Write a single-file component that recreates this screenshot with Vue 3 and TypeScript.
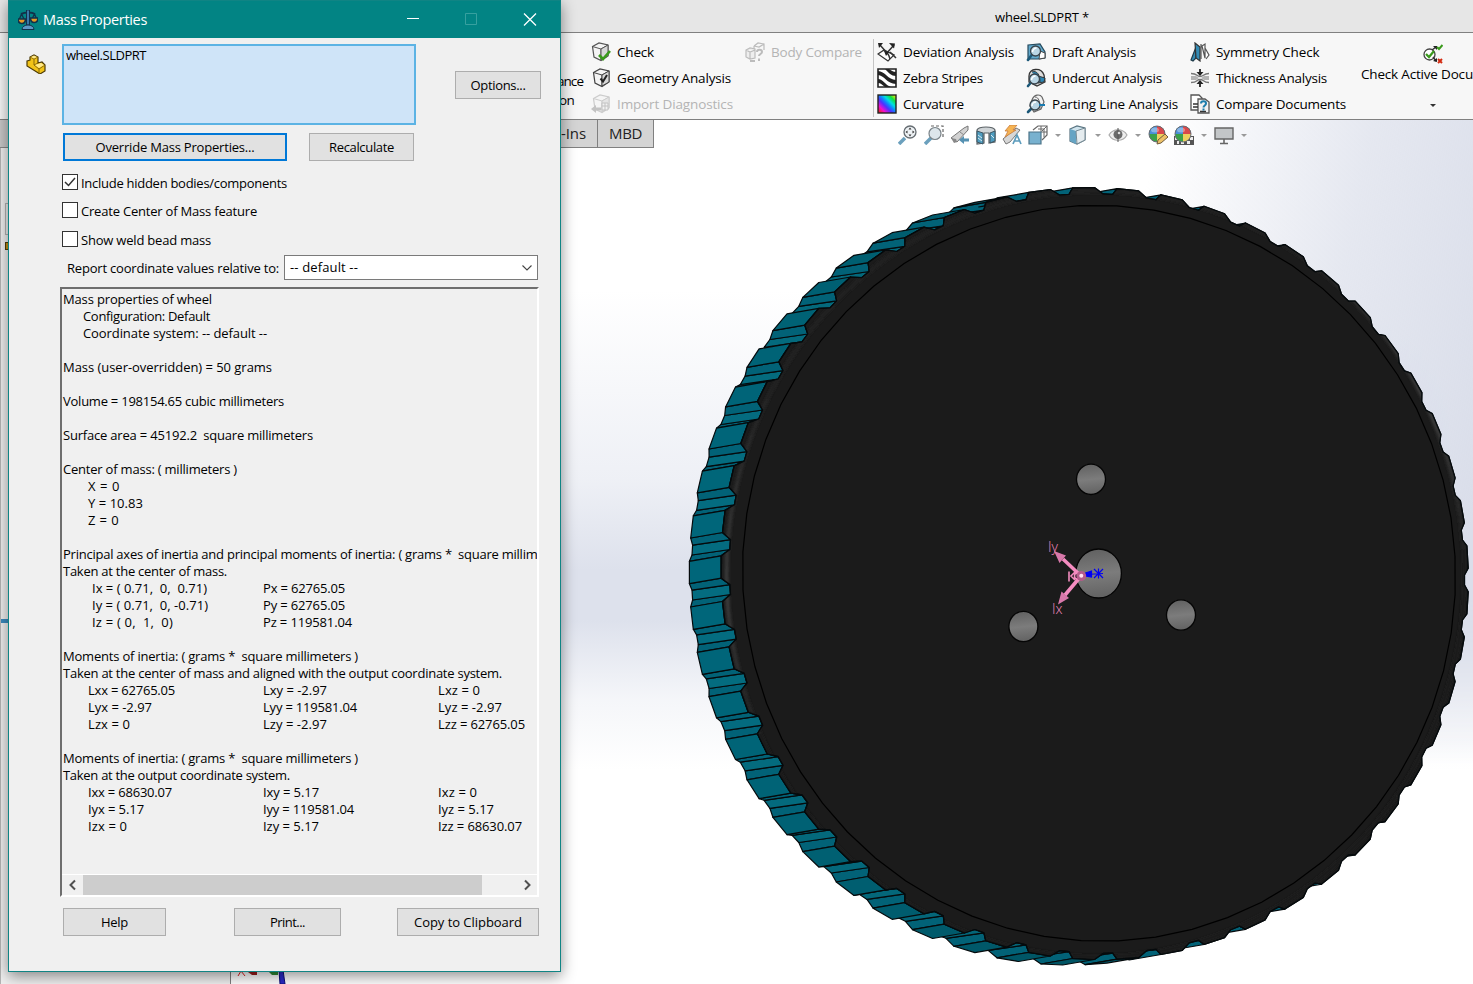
<script setup lang="ts">
import type { Directive } from 'vue'

/* Spreads a label's letters so that it takes the given width. */
const vFit: Directive<HTMLElement, number> = {
  mounted(el, { value }) {
    if (!value) return
    const natural = el.getBoundingClientRect().width
    const count = (el.textContent || '').length
    el.style.letterSpacing = ((value - natural) / count).toFixed(3) + 'px'
  },
}

type Tool = { icon: string; label: string; w: number; off?: boolean }

const cube = (c: string) =>
  `<path d="M1.500 4.500 8 1l9 2v11l-7 4.500-7-3.500z" fill="#f4f4f4" stroke="${c}" stroke-width="1.200"/><path d="M1.500 4.500l8.500 2.500 7-4M10 7v11" fill="none" stroke="${c}"/><path d="M10 7l7-4v11l-7 4z" fill="#d8d8d8" stroke="${c}"/>`
const lens = (x: number, y: number, r: number) =>
  `<path d="M${x - r * 0.7} ${y + r * 0.7}L2 18" stroke="#1c5878" stroke-width="2.600" stroke-linecap="round"/><circle cx="${x}" cy="${y}" r="${r}" fill="#b9d5e4" stroke="#39434a" stroke-width="1.300"/><path d="M${x - 3} ${y + 1}a4 4 0 0 1 4-4" stroke="#fff" stroke-width="1.500" fill="none"/>`
const ball =
  '<circle cx="9" cy="9" r="8" fill="#3aa04a"/><path d="M9 1a8 8 0 0 1 8 8H9z" fill="#d9484b"/><path d="M9 1a8 8 0 0 0-8 8h8z" fill="#4a8fd8"/><path d="M9 9h8a8 8 0 0 1-8 8z" fill="#edd05c"/><ellipse cx="7" cy="5" rx="4" ry="2.500" fill="#fff" opacity=".35"/><circle cx="9" cy="9" r="8" fill="none" stroke="#6b6b76"/>'

const icons: Record<string, string> = {
  check: cube('#555') + '<path d="M8 13l4 4 7-8" fill="none" stroke="#3a9a1c" stroke-width="2.600"/>',
  geometry: '<g transform="translate(1 0)">' + cube('#444') + '<path d="M8.500 10.500l2.500 3 4-6.500" fill="none" stroke="#222" stroke-width="2"/></g>',
  import:
    '<g opacity=".55" transform="translate(1 0)">' + cube('#aaa') + '<path d="M10 9h6v7h-6zM13 9v7M10 12h6" fill="#eee" stroke="#999"/><path d="M-1 15l5-4v2.500h5v3H4V19z" fill="#999"/></g>',
  compare:
    '<g fill="none" stroke="#bcbcbc" stroke-width="1.200"><path d="M1 8l4-2 5 1v9l-5 1-4-2zM1 8l4 2 5-2M5 10v7" fill="#eee"/><path d="M9 4l4-3 6 1v6M9 4v3M9 4l5 1 5-3"/><path d="M12 10c0-3 5-3 5 0 0 2-3 2-3 4" stroke-width="2"/><path d="M14 16.500v2.500" stroke-width="2"/><path d="M5 19h5" stroke-width="2"/></g>',
  deviation:
    '<path d="M1 12l6-4 10 5-6 6z" fill="#fff" stroke="#333" stroke-width="1.300"/><path d="M11 12L3 3M9 12l8-9M6 8c4 1 6 5 7 9M13 10l6 6" fill="none" stroke="#333" stroke-width="1.500"/><path d="M1 1h5L2 6zM12 1l6 .500-1 5zM7 9l5 1-3 4z" fill="#222"/>',
  zebra:
    '<path d="M1 1h18v18H1z" fill="#fff"/><path d="M1 3c7 0 10 9 18 9v4C10 16 7 7 1 7zM1 11c5 0 7 6 13 8H8c-3-2-4-4-7-4zM8 1c4 4 6 7 11 7V4c-3 0-5-2-7-3z" fill="#222"/><path d="M1 1h18v18H1z" fill="none" stroke="#222" stroke-width="1.600"/>',
  curvature:
    '<defs><linearGradient id="cv" x1="0" y1="1" x2="1" y2="0"><stop offset=".05" stop-color="#f02020"/><stop offset=".22" stop-color="#f010d0"/><stop offset=".4" stop-color="#5030ff"/><stop offset=".52" stop-color="#1080ff"/><stop offset=".65" stop-color="#00e0e0"/><stop offset=".8" stop-color="#10e040"/><stop offset=".95" stop-color="#e0f010"/></linearGradient></defs><rect x="1" y="1" width="18" height="18" fill="url(#cv)" stroke="#222" stroke-width="1.400"/>',
  draft:
    '<path d="M2 3l12-1 5 8v6l-6 1H2z" fill="#62a9cc" stroke="#25495c" stroke-width="1.200"/><path d="M14 9l5 2v5l-6 1z" fill="#fff" stroke="#444"/>' + lens(9.5, 9, 5),
  undercut:
    '<path d="M3 8c0-8 12-9 15-1l1 7-8 4-8-4z" fill="#ddd" stroke="#333" stroke-width="1.300"/><path d="M6 4c5-2 8 3 8 10M12 8l7 2-1 4-6 1z" fill="#2c86b4" stroke="#333"/>' + lens(8.5, 11, 5),
  parting:
    '<path d="M6 6c2-6 8-6 10-3l2 5-3 7-7 3-4-6z" fill="#f2f2f2" stroke="#666" stroke-width="1.200"/><path d="M9 3c4 0 5 5 5 13" fill="none" stroke="#666"/>' + lens(9, 11, 5) + '<path d="M13 11h6" stroke="#187ab0" stroke-width="2"/>',
  symmetry:
    '<path d="M1 18L6 5v11l-3 3z" fill="#348bb4" stroke="#1f3b4a" stroke-width="1.200"/><path d="M5 1l5 4v14l-4-3z" fill="#348bb4" stroke="#333" stroke-width="1.200"/><path d="M11 2v15M12 4l3-2v14zM15 6l4 7-3 4" fill="#fff" stroke="#555" stroke-width="1.200"/>',
  thickness:
    '<path d="M1 5.500c7 0 5 3 9 3s3-3 9-3M1 14.500c7 0 5-3 9-3s3 3 9 3" fill="none" stroke="#777" stroke-width="1.400"/><path d="M1 8h5l3 2-3 2H1zM19 8h-5l-3 2 3 2h5z" fill="#b4b4b4"/><path d="M10 1v5M10 19v-5" stroke="#222" stroke-width="1.800"/><path d="M6.500 4h7L10 8zM6.500 16h7L10 12z" fill="#222"/>',
  documents:
    '<path d="M1 1h8l3 3v12H1z" fill="#fff" stroke="#555" stroke-width="1.300"/><path d="M8 5h7l4 3v11H8z" fill="#f1f1f1" stroke="#555" stroke-width="1.300"/><path d="M3 10h5M3 13h5M10 17.500h6" stroke="#333" stroke-width="1.500"/><path d="M11 9.500c0-3 5-3 5 0 0 2-2.500 2-2.500 4M13.500 14.500v2" fill="none" stroke="#1d7dac" stroke-width="2"/>',
  active:
    '<circle cx="6.500" cy="10.500" r="5.500" fill="#fff" stroke="#444" stroke-width="1.300"/><path d="M3 10l3 3 5-6" fill="none" stroke="#3a9a1c" stroke-width="2.200"/><path d="M9 6l4-3M10 13l3 4" stroke="#333" stroke-width="1.500"/><path d="M10 2h4v4zM10 17l4 1v-4z" fill="#222"/><path d="M14 3l2 2 3.500-4" fill="none" stroke="#3a9a1c" stroke-width="2"/><path d="M15 15l4 4M19 15l-4 4" stroke="#d32a10" stroke-width="2"/>',
  zoomfit:
    '<path d="M7 13l-6 6" stroke="#6ba0bd" stroke-width="3.500"/><circle cx="12" cy="7" r="6" fill="#eef2f5" stroke="#666d72" stroke-width="1.300"/><path d="M12 2.500l1.500 2h-3zM12 11.500l1.500-2h-3zM7.500 7l2-1.500v3zM16.500 7l-2-1.500v3z" fill="#333"/>',
  zoomarea:
    '<path d="M7 13l-6 6" stroke="#6ba0bd" stroke-width="3.500"/><path d="M7 1h12v12" fill="none" stroke="#666" stroke-width="1.200" stroke-dasharray="3 2"/><circle cx="11" cy="8.500" r="6" fill="#dde6eb" stroke="#7a8388" stroke-width="1.200"/>',
  previous:
    '<path d="M1 13L14 3l4-2v4L7 17z" fill="#d2d2d2" stroke="#777"/><path d="M1 13l5 1 1 3-3 1z" fill="#888"/><path d="M10 7l4 3" stroke="#888"/><path d="M9 15l5-4v2.500h5v3h-5V19z" fill="#5591b2"/>',
  section:
    '<path d="M1 5c2-4 16-4 18 0v12l-6 1V8H8v10l-7 1z" fill="#cfd4d7" stroke="#5d6468" stroke-width="1.200"/><path d="M1 6l6 2v11l-6-2zM14 8l5-2v10l-5 2z" fill="#4f9dc0" stroke="#3d5664"/><path d="M2 10l4 3M2 13l4 3M15 10l3 3" stroke="#d8eaf2"/>',
  dynamic:
    '<path d="M1 14L14 3l4 2L8 17l-4 2z" fill="#d7d7d7" stroke="#777"/><path d="M8 0h7l-4 5h3L3 12l3-6H3z" fill="#f5b454" stroke="#c97b3c" stroke-width=".8"/><path d="M11 19l4-9 4 9M12.500 16h5" fill="none" stroke="#5c9cbd" stroke-width="1.700"/>',
  orient:
    '<path d="M5 5l5-4h9v9l-5 5" fill="#fff" stroke="#666" stroke-width="1.200"/><path d="M13 1v6h6M10 4h6v8M14 6l5-5" fill="none" stroke="#666"/><path d="M1 7h12v12H1z" fill="#78b1cf" stroke="#4b7388" stroke-width="1.200"/>',
  display:
    '<path d="M2 4l7-3 8 2v12l-8 4-7-3z" fill="#cfe4ee" stroke="#5a7582" stroke-width="1.200"/><path d="M2 4l6 2v13l-6-3z" fill="#65a4c4"/><path d="M8 6l9-3v12l-8 4z" fill="#e5ecef" stroke="#768a94"/>',
  eye:
    '<path d="M1 10c4-7 14-7 18 0-4 7-14 7-18 0z" fill="#eee" stroke="#aaa" stroke-width="1.200"/><circle cx="10" cy="9.500" r="4.500" fill="#6b6b6b"/><path d="M10 3v14" stroke="#555"/><circle cx="11" cy="8" r="1.300" fill="#ddd"/>',
  appearance: ball + '<path d="M9 19l1-4 7-6 3 3-7 6z" fill="#edc168" stroke="#6f5b3c"/>',
  scene: '<path d="M0 11h20v9H0z" fill="#555"/><path d="M1 12h3v3H1zM7 16h3v3H7zM13 16h3v3h-3zM16 12h3v3h-3zM3 16h2v3H3z" fill="#eee"/>' + ball,
  monitor:
    '<path d="M1 3h18v11H1z" fill="#c3c6c8" stroke="#666" stroke-width="1.400"/><path d="M10 14v4M6 18.500h8" stroke="#666" stroke-width="1.600"/>',
  scale:
    '<path d="M3 4c4-2 11-2 14 0" fill="none" stroke="#12304a" stroke-width="2"/><path d="M8.500 0h3v15h-3z" fill="#3a78a8" stroke="#12304a"/><path d="M4 19.500c0-6 12-6 12 0z" fill="#5b97c6" stroke="#12304a"/><path d="M3.500 4L1 10M3.500 4l3 6M16.500 4l-3 6M16.500 4l2.500 6" stroke="#12304a" stroke-width="1.300"/><path d="M0 9h7.500c0 6-7.500 6-7.500 0zM12.500 8H20c0 6-7.500 6-7.500 0z" fill="#e49a24" stroke="#12304a" stroke-width="1.600"/>',
  part:
    '<path d="M1 7l3-1V3l4-2 4 2v6l4-1 3 3v6l-5 3L1 12z" fill="#f2c318" stroke="#4d3b06" stroke-width="1.200"/><path d="M4 3l4 2 4-2M8 5v6l4-2M8 11l5 4 6-4M13 15v5" fill="none" stroke="#8a6a08"/><path d="M5 3l3-1.500L11 3 8 4.500zM9 11l6-2 3 2-5 3z" fill="#ffe98a"/>',
}

const groups: { cls: string; tools: Tool[] }[] = [
  { cls: 'g-check', tools: [
    { icon: 'check', label: 'Check', w: 37 },
    { icon: 'geometry', label: 'Geometry Analysis', w: 114 },
    { icon: 'import', label: 'Import Diagnostics', w: 116, off: true },
  ] },
  { cls: 'g-body', tools: [{ icon: 'compare', label: 'Body Compare', w: 91, off: true }] },
  { cls: 'g-dev', tools: [
    { icon: 'deviation', label: 'Deviation Analysis', w: 111 },
    { icon: 'zebra', label: 'Zebra Stripes', w: 80 },
    { icon: 'curvature', label: 'Curvature', w: 61 },
  ] },
  { cls: 'g-draft', tools: [
    { icon: 'draft', label: 'Draft Analysis', w: 84 },
    { icon: 'undercut', label: 'Undercut Analysis', w: 110 },
    { icon: 'parting', label: 'Parting Line Analysis', w: 126 },
  ] },
  { cls: 'g-sym', tools: [
    { icon: 'symmetry', label: 'Symmetry Check', w: 103.5 },
    { icon: 'thickness', label: 'Thickness Analysis', w: 111 },
    { icon: 'documents', label: 'Compare Documents', w: 130 },
  ] },
]

const viewTools = [
  { icon: 'zoomfit', w: 26 }, { icon: 'zoomarea', w: 26 }, { icon: 'previous', w: 26 }, { icon: 'section', w: 26 },
  { icon: 'dynamic', w: 26 }, { icon: 'orient', w: 40, menu: true }, { icon: 'display', w: 40, menu: true },
  { icon: 'eye', w: 40, menu: true }, { icon: 'appearance', w: 26 }, { icon: 'scene', w: 40, menu: true },
  { icon: 'monitor', w: 40, menu: true },
]

const options = [
  { label: 'Include hidden bodies/components', w: 206, on: true },
  { label: 'Create Center of Mass feature', w: 176, on: false },
  { label: 'Show weld bead mass', w: 130, on: false },
]

/* Report rows: each cell is [left offset, text width, text]. */
type Cell = [number, number, string]
const report: Cell[][] = [
  [[0, 149, 'Mass properties of wheel']],
  [[20, 127, 'Configuration: Default']],
  [[20, 184, 'Coordinate system: -- default --']],
  [],
  [[0, 209, 'Mass (user-overridden) = 50 grams']],
  [],
  [[0, 221, 'Volume = 198154.65 cubic millimeters']],
  [],
  [[0, 250, 'Surface area = 45192.2  square millimeters']],
  [],
  [[0, 174, 'Center of mass: ( millimeters )']],
  [[25, 32, 'X = 0']],
  [[25, 55, 'Y = 10.83']],
  [[25, 31, 'Z = 0']],
  [],
  [[0, 474.5, 'Principal axes of inertia and principal moments of inertia: ( grams *  square millim']],
  [[0, 164, 'Taken at the center of mass.']],
  [[29, 115, 'Ix = ( 0.71,  0,  0.71)'], [200, 82, 'Px = 62765.05']],
  [[29, 116, 'Iy = ( 0.71,  0, -0.71)'], [200, 82, 'Py = 62765.05']],
  [[29, 81, 'Iz = ( 0,  1,  0)'], [200, 89, 'Pz = 119581.04']],
  [],
  [[0, 295, 'Moments of inertia: ( grams *  square millimeters )']],
  [[0, 439, 'Taken at the center of mass and aligned with the output coordinate system.']],
  [[25, 87, 'Lxx = 62765.05'], [200, 64, 'Lxy = -2.97'], [375, 42, 'Lxz = 0']],
  [[25, 64, 'Lyx = -2.97'], [200, 94, 'Lyy = 119581.04'], [375, 64, 'Lyz = -2.97']],
  [[25, 42, 'Lzx = 0'], [200, 64, 'Lzy = -2.97'], [375, 87, 'Lzz = 62765.05']],
  [],
  [[0, 295, 'Moments of inertia: ( grams *  square millimeters )']],
  [[0, 227, 'Taken at the output coordinate system.']],
  [[25, 84, 'Ixx = 68630.07'], [200, 56, 'Ixy = 5.17'], [375, 39, 'Ixz = 0']],
  [[25, 56, 'Iyx = 5.17'], [200, 91, 'Iyy = 119581.04'], [375, 56, 'Iyz = 5.17']],
  [[25, 39, 'Izx = 0'], [200, 56, 'Izy = 5.17'], [375, 84, 'Izz = 68630.07']],
]
const cellStyle = (row: Cell[], i: number) => ({
  marginLeft: i === 0 ? row[0][0] + 'px' : '0',
  width: row[i + 1] ? row[i + 1][0] - row[i][0] + 'px' : 'auto',
})

/* Wheel tread: the same toothed ring seen at the front and at the back of the rim. */
type P = [number, number]
const TEETH = 53
const ring = (cx: number, cy: number, grooveShift: number): P[] => {
  const pts: P[] = []
  for (let i = 0; i < TEETH; i++) {
    for (const [f, groove] of [[-0.245, 0], [0.245, 0], [0.39, 1], [0.61, 1]]) {
      const t = Math.PI + ((i + f) * 2 * Math.PI) / TEETH
      const d = groove ? 6.2 : 0
      pts.push([
        cx + (373.7 - d) * Math.cos(t) + (groove ? grooveShift : 0),
        cy + (386 - d) * Math.sin(t) + 6.5 * Math.cos(t),
      ])
    }
  }
  return pts
}
const front = ring(1094.7, 573.5, 2.3)
const back = ring(1062.9, 579, -3.8)
const str = (p: P[]) => p.map((q) => q[0].toFixed(1) + ',' + q[1].toFixed(1)).join(' ')
const frontPoints = str(front)

const faces: { points: string; fill: string; land: boolean }[] = []
front.forEach((a, i) => {
  const j = (i + 1) % front.length
  const b = front[j]
  const cross = (b[0] - a[0]) * (back[i][1] - a[1]) - (b[1] - a[1]) * (back[i][0] - a[0])
  if (cross > 0) return
  const kind = i % 4
  const c = Math.abs(Math.cos(Math.atan2(a[1] - 573, a[0] - 1094)))
  const fill =
    kind === 0 ? `rgb(0,${Math.round(84 + 18 * c)},${Math.round(100 + 22 * c)})`
    : kind === 2 ? `rgb(4,${Math.round(98 + 10 * c)},${Math.round(116 + 12 * c)})`
    : '#026277'
  faces.push({ points: str([a, b, back[j], back[i]]), fill, land: kind === 0 })
})
faces.sort((p, q) => Number(p.land) - Number(q.land))

const rim = str(
  Array.from({ length: 60 }, (_, i): P => {
    const t = (i * Math.PI) / 30 + 0.05
    return [1099 + 356.5 * Math.cos(t), 573.3 + 368 * Math.sin(t) + 3 * Math.cos(t)]
  }),
)
const holes = [
  { x: 1091, y: 479.3, rx: 14.5, ry: 15.2 },
  { x: 1181, y: 615, rx: 14.5, ry: 15.2 },
  { x: 1023.4, y: 626.5, rx: 14.5, ry: 15.2 },
  { x: 1098.6, y: 573.5, rx: 22.8, ry: 24.5 },
]
</script>

<template>
  <div class="app">
    <header class="appbar"><span v-fit="94">wheel.SLDPRT *</span></header>

    <section class="ribbon">
      <div class="cut"><span v-fit="26">ance</span><span v-fit="15">on</span></div>
      <div v-for="g in groups" :key="g.cls" class="group" :class="g.cls">
        <div v-for="t in g.tools" :key="t.label" class="tool" :class="{ off: t.off }">
          <svg class="ico" viewBox="0 0 20 20" v-html="icons[t.icon]"></svg>
          <span v-fit="t.w">{{ t.label }}</span>
        </div>
      </div>
      <div class="active">
        <svg class="ico" viewBox="0 0 20 20" v-html="icons.active"></svg>
        <span v-fit="112">Check Active Docu</span>
        <i class="caret dark"></i>
      </div>
    </section>

    <main class="viewport">
      <div class="sky"></div>
      <div class="tabs">
        <span class="tab first"><b v-fit="25">-Ins</b></span><span class="tab mbd"><b v-fit="33">MBD</b></span>
      </div>
      <div class="viewbar">
        <span v-for="v in viewTools" :key="v.icon" class="vt" :style="{ width: v.w + 'px' }">
          <svg class="ico" viewBox="0 0 20 20" v-html="icons[v.icon]"></svg>
          <i v-if="v.menu" class="caret"></i>
        </span>
      </div>
    </main>

    <svg class="model" viewBox="0 0 1473 984">
      <defs>
        <linearGradient id="hole" x1="0" y1="0" x2=".1" y2="1">
          <stop offset="0" stop-color="#5f5f5f" /><stop offset=".55" stop-color="#7c7c7c" /><stop offset="1" stop-color="#646464" />
        </linearGradient>
        <linearGradient id="glow" x1="0" y1="0" x2=".25" y2="1">
          <stop offset="0" stop-color="#1f1f1f" /><stop offset=".25" stop-color="#222" /><stop offset=".5" stop-color="#404040" /><stop offset=".7" stop-color="#1b1b1b" />
        </linearGradient>
        <filter id="soft"><feGaussianBlur stdDeviation="1.8" /></filter>
        <clipPath id="face"><polygon :points="frontPoints" /></clipPath>
      </defs>
      <polygon v-for="(f, i) in faces" :key="i" :points="f.points" :fill="f.fill" class="edge" />
      <polygon :points="frontPoints" fill="#1b1b1b" class="edge" />
      <g clip-path="url(#face)">
        <ellipse cx="1095.500" cy="574" rx="369" ry="383" fill="none" stroke="url(#glow)" stroke-width="3.500" filter="url(#soft)" />
      </g>
      <polygon :points="frontPoints" fill="none" class="edge" />
      <polygon :points="rim" fill="#1b1b1b" stroke="#000" stroke-width="1.200" />
      <ellipse v-for="h in holes" :key="h.x" :cx="h.x" :cy="h.y" :rx="h.rx" :ry="h.ry" fill="url(#hole)" stroke="#050505" stroke-width="1.300" />
      <g stroke="#0000f5" stroke-width="1.200">
        <path d="M1086 574.500L1103 573.500M1098.500 568.500v10M1094 569l9 9M1103 569l-9 9" />
        <path d="M1085.500 573l6-2v6l-6-1z" fill="#0000f5" />
      </g>
      <g fill="none" stroke="#f48cc0">
        <path d="M1069 571.500v10M1075 572l-4 4 4 4M1077.500 573a3 3 0 1 0 0 6" stroke-width="1.600" />
        <path d="M1081 576L1063 559M1081 576L1065 595" stroke-width="3.600" />
        <path d="M1054 551l12 4.500-6.500 7.500zM1058 604.500l3.500-13 7.500 6.500z" fill="#d878aa" stroke="none" />
      </g>
      <circle cx="1081.300" cy="576" r="4.900" fill="#b45c8a" /><circle cx="1081.300" cy="575.800" r="2" fill="#ffe0f0" />
      <text x="1048" y="552" class="axis">Iy</text>
      <text x="1052" y="614" class="axis">Ix</text>
      <g>
        <rect x="0" y="970" width="230" height="14" fill="#f0f0f0" />
        <path d="M230.500 960v24" stroke="#808080" />
        <path d="M238 976l3-5 4 5" stroke="#e02020" fill="none" /><path d="M248 972h9v3h-5z" fill="#9c1c1c" />
        <path d="M268 971h10v4h-6z" fill="#2f8c34" /><path d="M279 970h4l2 14h-5z" fill="#2a2ac8" stroke="#0c0c78" />
      </g>
    </svg>

    <aside class="tree"><div class="treetab"></div><div class="treebox"></div><div class="treedot"></div><div class="treemark"></div></aside>

    <section class="dialog">
      <header class="title">
        <svg class="ico" viewBox="0 0 20 20" v-html="icons.scale"></svg>
        <span v-fit="104">Mass Properties</span>
        <svg class="winctl" viewBox="0 0 140 20">
          <path d="M7 8.500h12" stroke="#fff" /><path d="M65.500 3.500h11v11h-11z" fill="none" stroke="#37a09f" />
          <path d="M124 3.500l12 12M136 3.500l-12 12" stroke="#fff" stroke-width="1.300" />
        </svg>
      </header>
      <div class="top">
        <svg class="ico part" viewBox="0 0 20 20" v-html="icons.part"></svg>
        <div class="list"><span v-fit="80">wheel.SLDPRT</span></div>
        <button class="btn opt"><span v-fit="55">Options...</span></button>
      </div>
      <div class="actions">
        <button class="btn override"><span v-fit="159">Override Mass Properties...</span></button>
        <button class="btn recalc"><span v-fit="65">Recalculate</span></button>
      </div>
      <div class="checks">
        <label v-for="o in options" :key="o.label" class="check">
          <i class="box"><svg v-if="o.on" viewBox="0 0 14 14"><path d="M2 7l3.500 3.500L12 3" fill="none" stroke="#333" stroke-width="1.500" /></svg></i>
          <span v-fit="o.w">{{ o.label }}</span>
        </label>
      </div>
      <div class="coord">
        <span v-fit="212" class="lbl">Report coordinate values relative to:</span>
        <div class="select"><span v-fit="68">-- default --</span><svg viewBox="0 0 10 6"><path d="M.5.5L5 5 9.500.5" fill="none" stroke="#444" stroke-width="1.100" /></svg></div>
      </div>
      <div class="report">
        <div class="lines">
          <div v-for="(row, r) in report" :key="r" class="line">
            <div v-for="(c, i) in row" :key="i" class="cell" :style="cellStyle(row, i)"><span v-fit="c[1]">{{ c[2] }}</span></div>
          </div>
        </div>
        <div class="scroll">
          <svg viewBox="0 0 20 20"><path d="M12 5.500L7.500 10l4.500 4.500" /></svg>
          <div class="thumb"></div>
          <svg class="right" viewBox="0 0 20 20"><path d="M8 5.500l4.500 4.500L8 14.500" /></svg>
        </div>
      </div>
      <footer class="foot">
        <button class="btn help"><span v-fit="27">Help</span></button>
        <button class="btn print"><span v-fit="35">Print...</span></button>
        <button class="btn copy"><span v-fit="108">Copy to Clipboard</span></button>
      </footer>
    </section>
  </div>
</template>

<style>
html, body { overflow: hidden; background: #fff; }
</style>

<style scoped>
* { box-sizing: border-box; }
.app { position: relative; width: 1473px; height: 984px; overflow: hidden; display: flex; flex-direction: column; background: #fff; font: 13px/17px "Open Sans", "Noto Sans", sans-serif; color: #000; }
span, b { white-space: pre; font-weight: 400; }
.ico { width: 20px; height: 20px; flex: none; display: block; }
.appbar { height: 33px; background: #e6e6e6; border-bottom: 1px solid #808080; padding: 9px 0 0 995px; }
.ribbon { height: 87px; background: #f7f7f7; border-bottom: 1px solid #808080; display: flex; font-size: 13.5px; overflow: hidden; }
.cut { width: 583px; padding-top: 39px; display: flex; flex-direction: column; align-items: flex-end; line-height: 19px; flex: none; }
.cut span:last-child { margin-right: 9px; }
.group { padding-top: 6px; flex: none; }
.tool { display: flex; align-items: center; gap: 6px; height: 26px; }
.tool span { line-height: 24px; }
.off { color: #b4b4b4; }
.g-check { width: 156px; padding-left: 8px; }
.g-body { width: 134px; padding-left: 6px; }
.g-dev { width: 152px; border-left: 1px solid #c4c4c4; padding-left: 3px; height: 78px; margin-top: 6px; padding-top: 0; }
.g-draft { width: 164px; padding-left: 1px; }
.g-sym { width: 171px; padding-left: 1px; }
.active { width: 113px; padding-top: 11px; flex: none; margin-left: 1px; }
.active .ico { margin-left: 62px; }
.active span { display: block; width: max-content; line-height: 20px; height: 20px; }
.active .caret { display: block; margin: 20px 0 0 69px; }
.caret { border: 3px solid transparent; border-top-color: #999; border-bottom: 0; width: 0; height: 0; }
.caret.dark { border-top-color: #333; }
.viewport { flex: 1; position: relative; isolation: isolate; display: flex; background: linear-gradient(to bottom, rgba(221,225,236,0) 0, rgba(221,225,236,0) 170px, rgba(221,225,236,.5) 360px, #dde1ec 450px, #dde1ec 500px, rgba(221,225,236,.3) 580px, rgba(221,225,236,0) 650px); }
.sky { position: absolute; inset: 0; background: linear-gradient(102deg, rgba(218,222,234,0) 70%, rgba(218,222,234,.7) 83%, #dadeea 94%); -webkit-mask-image: linear-gradient(to bottom, #000 0, #000 480px, transparent 645px); mask-image: linear-gradient(to bottom, #000 0, #000 480px, transparent 645px); }
.tabs { display: flex; width: 897px; height: 28px; flex: none; z-index: 1; }
.tab { background: #d4d4d4; border: 1px solid #808080; border-top: 0; height: 28px; font-size: 15px; line-height: 27px; color: #222; }
.first { width: 598px; text-align: right; padding-right: 11px; }
.mbd { width: 57px; margin-left: -1px; padding-left: 11px; }
.viewbar { display: flex; padding-top: 5px; height: 30px; z-index: 1; margin-left: 1px; }
.vt { display: flex; align-items: center; height: 20px; gap: 7px; }
.model { position: absolute; left: 0; top: 0; width: 1473px; height: 984px; }
.edge { stroke: #050a0c; stroke-width: 1.2; stroke-linejoin: round; }
.axis { font: 300 14px "Open Sans", sans-serif; fill: #f48cc0; }
.tree { position: absolute; left: 0; top: 120px; width: 10px; height: 864px; background: #f0f0f0; border-left: 1px solid #b4b4b4; }
.treetab { height: 28px; background: #c8c8c8; border-bottom: 1px solid #888; margin-left: -1px; }
.treebox { margin: 55px 0 0 4px; height: 32px; border: 1px solid #b4b4b4; }
.treedot { width: 6px; height: 8px; margin: 7px 0 0 4px; background: #c09010; border: 1px solid #4d3b06; }
.treemark { height: 4px; margin-top: 369px; background: #3c8cc0; }
.dialog { position: absolute; left: 8px; top: 0; width: 553px; height: 972px; background: #f0f0f0; border: 1px solid #108484; border-top: 0; box-shadow: 0 4px 14px rgba(0,0,0,.45); display: flex; flex-direction: column; }
.title { height: 38px; flex: none; background: #028484; color: #fff; display: flex; align-items: center; padding: 0 0 0 9px; font-size: 14.5px; gap: 5px; border-top: 1px solid #108484; }
.winctl { width: 140px; height: 20px; margin-left: auto; margin-right: 20px; }
.top { display: flex; height: 87px; padding-top: 6px; flex: none; }
.part { margin: 10px 16px 0 17px; }
.list { width: 354px; height: 81px; background: #cfe4f8; border: 2px solid #5cb3e4; padding: 1px 2px; }
.btn { height: 28px; background: #e1e1e1; border: 1px solid #adadad; padding: 0; font: inherit; color: #000; display: flex; align-items: center; justify-content: center; }
.opt { width: 86px; margin: 27px 0 0 39px; }
.actions { display: flex; gap: 22px; padding: 8px 0 0 54px; height: 44px; flex: none; }
.override { width: 224px; border: 2px solid #0078d7; }
.recalc { width: 105px; }
.checks { padding: 5px 0 0 53px; height: 86px; flex: none; }
.check { display: flex; gap: 3px; height: 28px; }
.check:nth-child(2) { height: 29px; }
.check span { margin-top: 1px; }
.box { width: 16px; height: 16px; background: #fff; border: 1px solid #333; flex: none; }
.box svg { display: block; width: 14px; height: 14px; }
.coord { display: flex; align-items: center; height: 25px; padding-left: 58px; gap: 5px; flex: none; }
.lbl { padding-top: 2px; }
.select { width: 254px; height: 25px; border: 1px solid #7a7a7a; background: #fff; display: flex; align-items: center; justify-content: space-between; padding: 0 5px; }
.select svg { width: 10px; height: 6px; }
.report { margin: 7px 0 0 51px; width: 479px; height: 610px; border: 2px solid #fff; border-left-color: #6e6e6e; border-top-color: #6e6e6e; flex: none; display: flex; flex-direction: column; }
.lines { height: 586px; padding: 2px 0 0 1px; overflow: hidden; flex: none; border-bottom: 1px solid #fff; }
.line { display: flex; height: 17px; }
.cell { flex: none; }
.scroll { display: flex; height: 20px; width: 475px; padding-left: 1px; }
.scroll svg { width: 20px; height: 20px; flex: none; }
.scroll path { fill: none; stroke: #505050; stroke-width: 2; }
.thumb { width: 399px; background: #cdcdcd; }
.scroll .right { margin-left: auto; }
.foot { display: flex; padding: 11px 0 0 54px; }
.help { width: 103px; }
.print { width: 107px; margin-left: 68px; }
.copy { width: 142px; margin-left: 56px; }
</style>
